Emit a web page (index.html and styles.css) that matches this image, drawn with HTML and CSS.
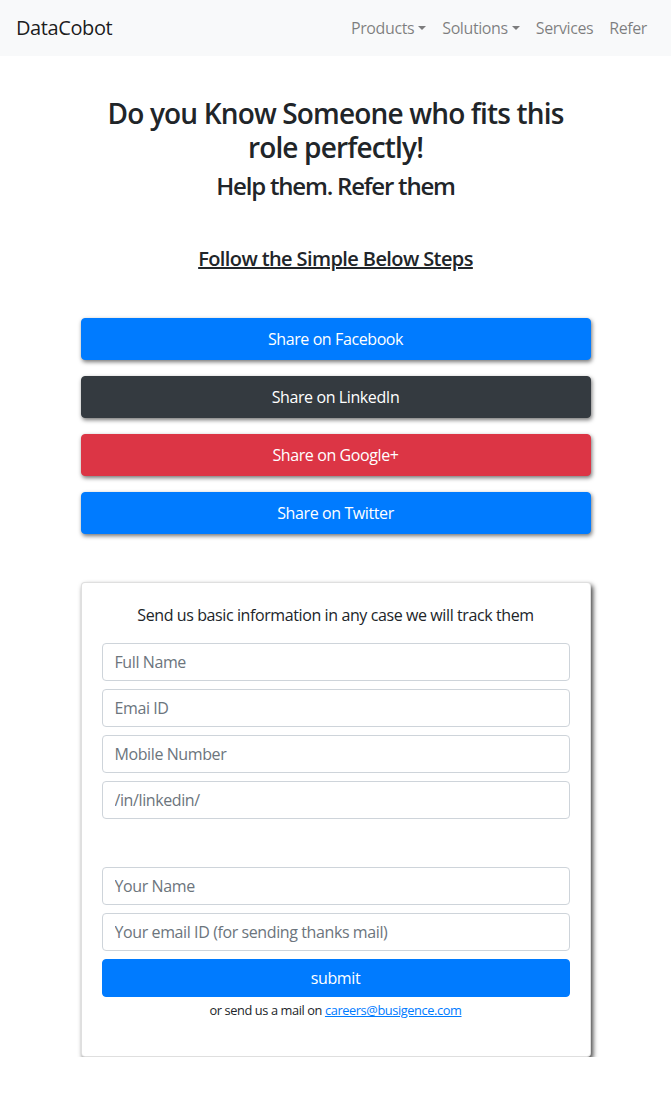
FILE: index.html
```html
<!DOCTYPE html>
<html lang="en">
<head>
<meta charset="utf-8">
<title>DataCobot - Refer</title>
<link rel="stylesheet" href="styles.css">
</head>
<body>
<nav class="navbar">
  <a class="brand" href="#">DataCobot</a>
  <ul class="nav">
    <li><a class="nav-link dropdown" href="#">Products</a></li>
    <li><a class="nav-link dropdown" href="#">Solutions</a></li>
    <li><a class="nav-link" href="#">Services</a></li>
    <li><a class="nav-link" href="#">Refer</a></li>
  </ul>
</nav>
<main class="container">
  <h3 class="title">Do you Know Someone who fits this role perfectly!</h3>
  <h4 class="subtitle">Help them. Refer them</h4>
  <h5 class="steps">Follow the Simple Below Steps</h5>
  <div class="shares">
    <button class="btn btn-primary">Share on Facebook</button>
    <button class="btn btn-dark">Share on LinkedIn</button>
    <button class="btn btn-danger">Share on Google+</button>
    <button class="btn btn-primary">Share on Twitter</button>
  </div>
  <form class="card">
    <p class="card-lead">Send us basic information in any case we will track them</p>
    <input class="field" type="text" placeholder="Full Name">
    <input class="field" type="text" placeholder="Emai ID">
    <input class="field" type="text" placeholder="Mobile Number">
    <input class="field" type="text" placeholder="/in/linkedin/">
    <div class="spacer"></div>
    <input class="field" type="text" placeholder="Your Name">
    <input class="field" type="text" placeholder="Your email ID (for sending thanks mail)">
    <button class="submit" type="button">submit</button>
    <p class="note">or send us a mail on <a href="#">careers@busigence.com</a></p>
  </form>
</main>
</body>
</html>
```
FILE: styles.css
```css
* { box-sizing: border-box; }
html, body { margin: 0; padding: 0; }
body {
  font-family: "Open Sans", "Noto Sans", sans-serif;
  font-size: 16px;
  line-height: 1.5;
  letter-spacing: -0.025em;
  color: #212529;
  background: #fff;
}
a { text-decoration: none; }
button, input { letter-spacing: inherit; }

.navbar {
  display: flex;
  justify-content: space-between;
  align-items: center;
  height: 56px;
  padding: 8px 16px;
  background: #f8f9fa;
}
.brand {
  font-size: 20px;
  line-height: 30px;
  color: rgba(0,0,0,.9);
}
.nav {
  display: flex;
  list-style: none;
  margin: 0;
  padding: 0;
}
.nav-link {
  display: block;
  padding: 8px;
  line-height: 24px;
  color: rgba(0,0,0,.5);
}
.dropdown::after {
  content: "";
  display: inline-block;
  margin-left: .255em;
  vertical-align: .255em;
  border-top: .3em solid;
  border-right: .3em solid transparent;
  border-left: .3em solid transparent;
}

.container {
  width: 510px;
  margin: 0 auto;
  padding-top: 41px;
}
.title, .subtitle, .steps {
  text-align: center;
  font-weight: 600;
  line-height: 1.2;
  margin: 0;
}
.title {
  font-size: 28px;
  letter-spacing: -0.03em;
  max-width: 485px;
  margin: 0 auto 8px;
}
.subtitle { font-size: 24px; letter-spacing: -0.05em; }
.steps {
  font-size: 20px;
  margin-top: 46px;
  text-decoration: underline;
  letter-spacing: -0.03em;
}

.shares {
  display: flex;
  flex-direction: column;
  gap: 16px;
  margin-top: 47px;
}
.btn {
  display: block;
  width: 100%;
  height: 42px;
  padding: 8px 12px;
  font-family: inherit;
  font-size: 16px;
  line-height: 24px;
  color: #fff;
  border: 1px solid transparent;
  border-radius: 4px;
  box-shadow: 1px 2px 4px rgba(0,0,0,.55);
  cursor: pointer;
}
.btn-primary { background: #007bff; border-color: #007bff; }
.btn-dark { background: #343a40; border-color: #343a40; }
.btn-danger { background: #dc3545; border-color: #dc3545; }

.card {
  margin: 48px 0 0;
  padding: 20px;
  border: 1px solid rgba(0,0,0,.125);
  border-radius: 4px;
  box-shadow: 2px 3px 5px rgba(0,0,0,.75);
  background: #fff;
}
.card-lead {
  margin: 0 0 16px;
  text-align: center;
}
.field {
  display: block;
  width: 100%;
  height: 38px;
  margin-bottom: 8px;
  padding: 6px 12px;
  font-family: inherit;
  font-size: 16px;
  line-height: 24px;
  color: #495057;
  border: 1px solid #ced4da;
  border-radius: 4px;
  background: #fff;
}
.field::placeholder { color: #6c757d; opacity: 1; }
.spacer { height: 40px; }
.submit {
  display: block;
  width: 100%;
  height: 38px;
  font-family: inherit;
  font-size: 16px;
  color: #fff;
  background: #007bff;
  border: 1px solid #007bff;
  border-radius: 4px;
}
.note {
  margin: 4px 0 16px;
  font-size: 12.8px;
  line-height: 19px;
  text-align: center;
}
.note a {
  color: #007bff;
  text-decoration: underline;
}
```
